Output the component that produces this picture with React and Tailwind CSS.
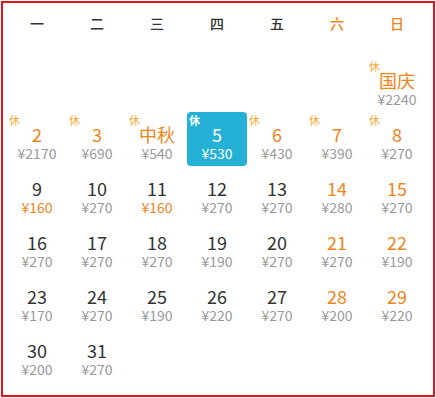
const rows = [
  [null, null, null, null, null, null, { d: "国庆", p: "2240", o: true, x: true }],
  [
    { d: "2", p: "2170", o: true, x: true },
    { d: "3", p: "690", o: true, x: true },
    { d: "中秋", p: "540", o: true, x: true },
    { d: "5", p: "530", o: true, x: true, sel: true },
    { d: "6", p: "430", o: true, x: true },
    { d: "7", p: "390", o: true, x: true },
    { d: "8", p: "270", o: true, x: true },
  ],
  [
    { d: "9", p: "160", lo: true },
    { d: "10", p: "270" },
    { d: "11", p: "160", lo: true },
    { d: "12", p: "270" },
    { d: "13", p: "270" },
    { d: "14", p: "280", o: true },
    { d: "15", p: "270", o: true },
  ],
  [
    { d: "16", p: "270" },
    { d: "17", p: "270" },
    { d: "18", p: "270" },
    { d: "19", p: "190" },
    { d: "20", p: "270" },
    { d: "21", p: "270", o: true },
    { d: "22", p: "190", o: true },
  ],
  [
    { d: "23", p: "170" },
    { d: "24", p: "270" },
    { d: "25", p: "190" },
    { d: "26", p: "220" },
    { d: "27", p: "270" },
    { d: "28", p: "200", o: true },
    { d: "29", p: "220", o: true },
  ],
  [{ d: "30", p: "200" }, { d: "31", p: "270" }, null, null, null, null, null],
];

const heads = ["一", "二", "三", "四", "五", "六", "日"];

function Cell({ c }) {
  if (!c) return <div className="h-[54px]" />;
  if (c.sel) {
    return (
      <div className="relative h-[54px] rounded-[4px] bg-[#25b0d5] text-white">
        <span className="absolute left-[2px] top-[1px] text-[11px] leading-[14px] font-bold">休</span>
        <div className="pt-[12px] text-center text-[18px] leading-[20px]">{c.d}</div>
        <div className="text-center text-[14px] leading-[18px]">¥{c.p}</div>
      </div>
    );
  }
  return (
    <div className="relative h-[54px]">
      {c.x && (
        <span className="absolute left-[2px] top-[1px] text-[11px] leading-[14px] text-[#f7a93b]">休</span>
      )}
      <div
        className={
          "pt-[12px] text-center text-[18px] leading-[20px] " +
          (c.o ? "text-[#f08519]" : "text-[#333333]")
        }
      >
        {c.d}
      </div>
      <div
        className={
          "text-center text-[14px] leading-[18px] " +
          (c.lo ? "text-[#f08519]" : "text-[#999999]")
        }
      >
        ¥{c.p}
      </div>
    </div>
  );
}

export default function App() {
  return (
    <div
      className="w-[436px] h-[398px] bg-white pt-px pl-px"
      style={{ fontFamily: "'Noto Sans CJK SC', 'Noto Sans', sans-serif" }}
    >
      <div className="w-[434px] h-[396px] border-2 border-[#e3131b] pl-[4px]">
        <div className="grid grid-cols-[repeat(7,60px)] h-[40px] items-center">
          {heads.map((h, i) => (
            <div
              key={h}
              className={
                "text-center text-[14px] font-medium " +
                (i >= 5 ? "text-[#f08519]" : "text-[#333333]")
              }
            >
              {h}
            </div>
          ))}
        </div>
        <div className="mt-[15px] grid grid-cols-[repeat(7,60px)]">
          {rows.flatMap((r, ri) => r.map((c, ci) => <Cell key={ri + "-" + ci} c={c} />))}
        </div>
      </div>
    </div>
  );
}
